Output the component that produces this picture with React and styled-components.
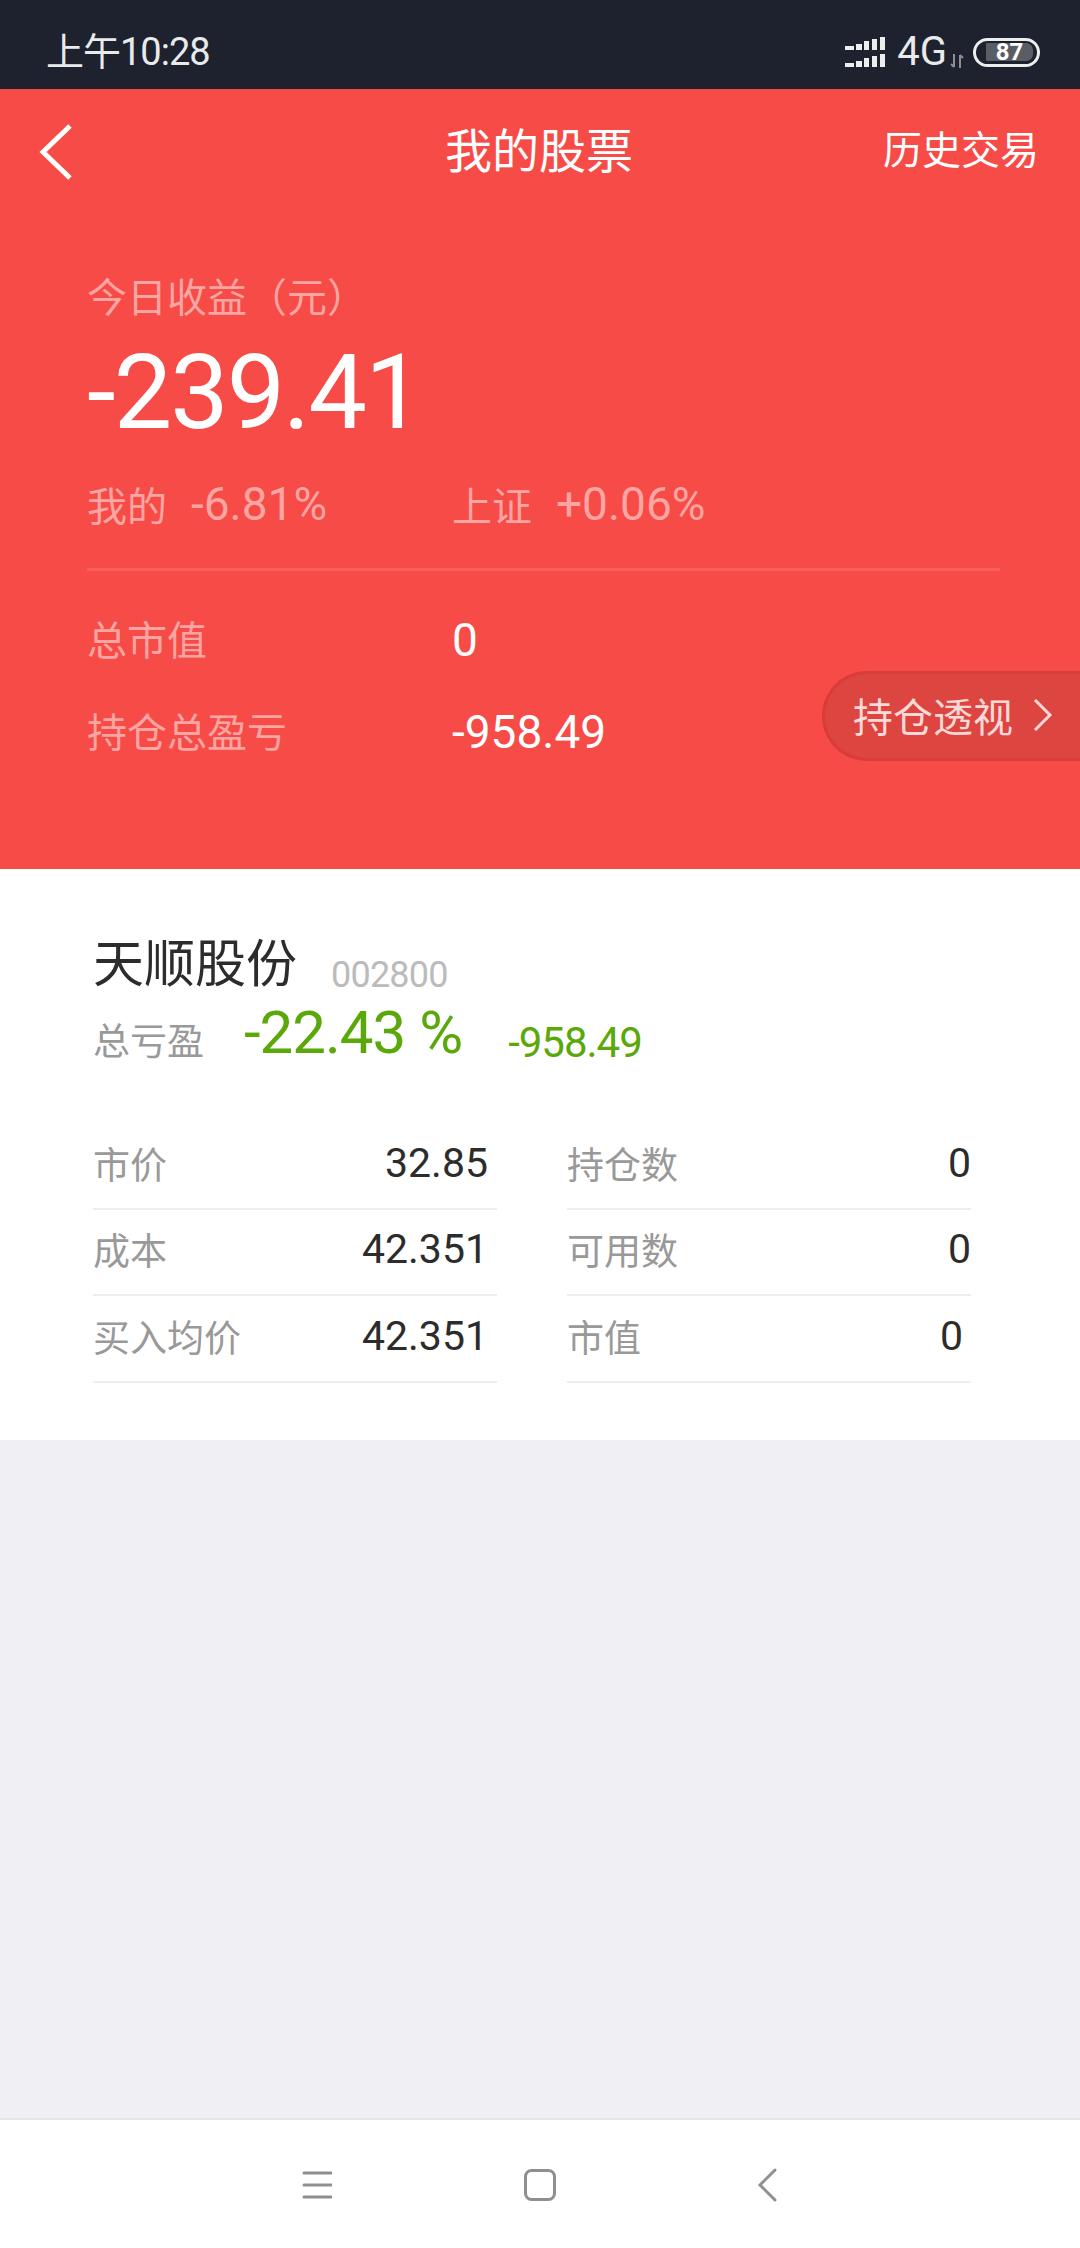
import React from 'react';
import styled, { createGlobalStyle } from 'styled-components';

const GlobalStyle = createGlobalStyle`
  html, body {
    margin: 0;
    padding: 0;
    background: #efeff4;
  }
  * {
    box-sizing: border-box;
  }
`;

const Page = styled.div`
  display: flex;
  flex-direction: column;
  width: 1080px;
  height: 2248px;
  overflow: hidden;
  font-family: Roboto, "Noto Sans CJK SC", sans-serif;
  background: #efeff4;
`;

const StatusBar = styled.div`
  display: flex;
  align-items: center;
  justify-content: space-between;
  height: 89px;
  padding: 15px 40px 0 46px;
  background: #1d222e;
  color: #e9eaec;
`;

const Clock = styled.span`
  font-size: 38px;
  letter-spacing: -1px;
  line-height: 1;
`;

const StatusIcons = styled.div`
  display: flex;
  align-items: center;
`;

const NetLabel = styled.span`
  margin-left: 12px;
  font-size: 40px;
  line-height: 1;
`;

const TransferSlot = styled.span`
  display: flex;
  align-self: flex-end;
  margin: 0 0 4px 3px;
`;

const Battery = styled.div`
  display: flex;
  align-items: center;
  width: 67px;
  height: 29px;
  margin-left: 9px;
  padding: 0 4px 0 10px;
  border: 3px solid #eceded;
  border-radius: 15px;
`;

const BatteryFill = styled.div`
  width: 47px;
  height: 18px;
  border-radius: 1px 7px 7px 1px;
  background: #5a5d65;
  color: #fff;
  font-size: 24px;
  font-weight: 700;
  line-height: 18px;
  text-align: center;
`;

const Hero = styled.section`
  position: relative;
  height: 780px;
  background: #f74b47;
  color: #fff;
`;

const NavBar = styled.header`
  display: grid;
  grid-template-columns: 1fr auto 1fr;
  align-items: center;
  height: 125px;
  padding: 0 41px 0 39px;
`;

const NavTitle = styled.h1`
  margin: 0;
  font-size: 47px;
  font-weight: 400;
  line-height: 1;
`;

const NavLink = styled.span`
  justify-self: end;
  font-size: 39px;
  line-height: 1;
`;

const Summary = styled.div`
  padding: 60px 80px 0 87px;
`;

const Dim = styled.span`
  color: #fda5a2;
`;

const TodayLabel = styled(Dim)`
  display: block;
  font-size: 40px;
  line-height: 50px;
`;

const TodayValue = styled.div`
  margin-top: 14px;
  font-size: 104px;
  letter-spacing: -2px;
  line-height: 110px;
`;

const CompareRow = styled.div`
  display: flex;
  align-items: center;
  height: 60px;
  margin-top: 26px;
  font-size: 46px;
  color: #fda5a2;
`;

const CompareItem = styled.div`
  display: flex;
  align-items: center;
  gap: 24px;
  width: ${(p) => p.$width}px;
`;

const CompareLabel = styled.span`
  font-size: 40px;
`;

const Divider = styled.div`
  height: 3px;
  margin-top: 34px;
  background: #fa5f5b;
`;

const StatRow = styled.div`
  display: flex;
  align-items: center;
  height: 50px;
  margin-top: ${(p) => p.$top}px;
`;

const StatLabel = styled(Dim)`
  width: 365px;
  font-size: 40px;
`;

const StatValue = styled.span`
  padding-top: 3px;
  font-size: 46px;
`;

const DetailButton = styled.div`
  position: absolute;
  top: 582px;
  right: 0;
  display: flex;
  align-items: center;
  gap: 20px;
  width: 258px;
  height: 90px;
  padding: 0 0 3px 28px;
  border: 3px solid #d93c3b;
  border-right: 0;
  border-radius: 45px 0 0 45px;
  background: #dd4541;
  color: #ffd9d8;
  font-size: 40px;
`;

const HoldingCard = styled.section`
  height: 571px;
  padding: 66px 76px 0 93px;
  background: #fff;
`;

const NameRow = styled.div`
  display: flex;
  align-items: flex-end;
`;

const StockName = styled.span`
  font-size: 51px;
  line-height: 60px;
  color: #2c2c2c;
`;

const StockCode = styled.span`
  margin-left: 34px;
  font-size: 36px;
  letter-spacing: -0.8px;
  line-height: 40px;
  color: #bbbbbb;
`;

const ProfitRow = styled.div`
  display: flex;
  align-items: flex-end;
  height: 73px;
  color: #5aa80a;
`;

const ProfitLabel = styled.span`
  font-size: 37px;
  line-height: 50px;
  color: #999;
`;

const ProfitPercent = styled.span`
  margin-left: 40px;
  font-size: 60px;
  letter-spacing: -1px;
  line-height: 70px;
`;

const ProfitAmount = styled.span`
  margin-left: 46px;
  font-size: 42px;
  letter-spacing: -1px;
  line-height: 50px;
`;

const Table = styled.div`
  display: grid;
  grid-template-columns: 404px 404px;
  column-gap: 70px;
  margin-top: 55px;
`;

const Cell = styled.div`
  display: flex;
  align-items: center;
  justify-content: space-between;
  height: 86.5px;
  padding: 0 ${(p) => p.$inset}px 5px 0;
  border-bottom: 2px solid #eeeeee;
`;

const CellLabel = styled.span`
  font-size: 37px;
  color: #999;
`;

const CellValue = styled.span`
  font-size: 41px;
  color: #2c2c2c;
`;

const Filler = styled.div`
  flex: 1;
  background: #efeff4;
`;

const BottomBar = styled.nav`
  display: grid;
  grid-template-columns: 222px 233px 20px;
  align-items: center;
  height: 130px;
  padding: 2px 0 0 302px;
  border-top: 2px solid #e4e4e6;
  background: #fff;
`;

const rows = [
  { label: '市价', value: '32.85', inset: 9 },
  { label: '持仓数', value: '0', inset: 0 },
  { label: '成本', value: '42.351', inset: 9 },
  { label: '可用数', value: '0', inset: 0 },
  { label: '买入均价', value: '42.351', inset: 9 },
  { label: '市值', value: '0', inset: 8 },
];

const SignalIcon = () => (
  <svg width="40" height="30" viewBox="0 0 40 30" fill="#eceded">
    <rect x="0" y="9" width="9" height="4" />
    <rect x="11" y="7" width="6" height="6" />
    <rect x="19" y="4" width="5" height="9" />
    <rect x="27" y="2" width="5" height="11" />
    <rect x="35" y="0" width="5" height="13" />
    <rect x="0" y="26" width="9" height="4" />
    <rect x="11" y="24" width="6" height="6" />
    <rect x="19" y="21" width="5" height="9" />
    <rect x="27" y="19" width="5" height="11" />
    <rect x="35" y="17" width="5" height="13" />
  </svg>
);

const TransferIcon = () => (
  <svg width="14" height="14" viewBox="0 0 14 14" fill="none" stroke="#8b8e94" strokeWidth="2">
    <path d="M4 0v13M1 10l3 3" />
    <path d="M10 14V1M13 4l-3-3" />
  </svg>
);

const BackIcon = () => (
  <svg width="34" height="56" viewBox="0 0 34 56" fill="none" stroke="#fff" strokeWidth="5">
    <path d="M31 2L4 28l27 26" />
  </svg>
);

const ChevronIcon = () => (
  <svg width="20" height="34" viewBox="0 0 20 34" fill="none" stroke="#ffd9d8" strokeWidth="3">
    <path d="M2 2l15 15L2 32" />
  </svg>
);

const MenuIcon = () => (
  <svg width="30" height="28" viewBox="0 0 30 28" fill="none" stroke="#8f8f8f" strokeWidth="3" strokeLinecap="round">
    <path d="M2 2h27M2 14h27M2 26h27" />
  </svg>
);

const HomeIcon = () => (
  <svg width="32" height="32" viewBox="0 0 32 32" fill="none" stroke="#8f8f8f" strokeWidth="3">
    <rect x="1.5" y="1.5" width="29" height="29" rx="6" />
  </svg>
);

const NavBackIcon = () => (
  <svg width="20" height="34" viewBox="0 0 20 34" fill="none" stroke="#8f8f8f" strokeWidth="3" strokeLinecap="round">
    <path d="M18 2L3 17l15 15" />
  </svg>
);

export default function App() {
  return (
    <Page>
      <GlobalStyle />
      <StatusBar>
        <Clock>上午10:28</Clock>
        <StatusIcons>
          <SignalIcon />
          <NetLabel>4G</NetLabel>
          <TransferSlot>
            <TransferIcon />
          </TransferSlot>
          <Battery>
            <BatteryFill>87</BatteryFill>
          </Battery>
        </StatusIcons>
      </StatusBar>

      <Hero>
        <NavBar>
          <BackIcon />
          <NavTitle>我的股票</NavTitle>
          <NavLink>历史交易</NavLink>
        </NavBar>
        <Summary>
          <TodayLabel>今日收益（元）</TodayLabel>
          <TodayValue>-239.41</TodayValue>
          <CompareRow>
            <CompareItem $width={365}>
              <CompareLabel>我的</CompareLabel>
              <span>-6.81%</span>
            </CompareItem>
            <CompareItem $width={400}>
              <CompareLabel>上证</CompareLabel>
              <span>+0.06%</span>
            </CompareItem>
          </CompareRow>
          <Divider />
          <StatRow $top={42}>
            <StatLabel>总市值</StatLabel>
            <StatValue>0</StatValue>
          </StatRow>
          <StatRow $top={42}>
            <StatLabel>持仓总盈亏</StatLabel>
            <StatValue>-958.49</StatValue>
          </StatRow>
        </Summary>
        <DetailButton>
          持仓透视
          <ChevronIcon />
        </DetailButton>
      </Hero>

      <HoldingCard>
        <NameRow>
          <StockName>天顺股份</StockName>
          <StockCode>002800</StockCode>
        </NameRow>
        <ProfitRow>
          <ProfitLabel>总亏盈</ProfitLabel>
          <ProfitPercent>-22.43 %</ProfitPercent>
          <ProfitAmount>-958.49</ProfitAmount>
        </ProfitRow>
        <Table>
          {rows.map((row) => (
            <Cell key={row.label} $inset={row.inset}>
              <CellLabel>{row.label}</CellLabel>
              <CellValue>{row.value}</CellValue>
            </Cell>
          ))}
        </Table>
      </HoldingCard>

      <Filler />

      <BottomBar>
        <MenuIcon />
        <HomeIcon />
        <NavBackIcon />
      </BottomBar>
    </Page>
  );
}
